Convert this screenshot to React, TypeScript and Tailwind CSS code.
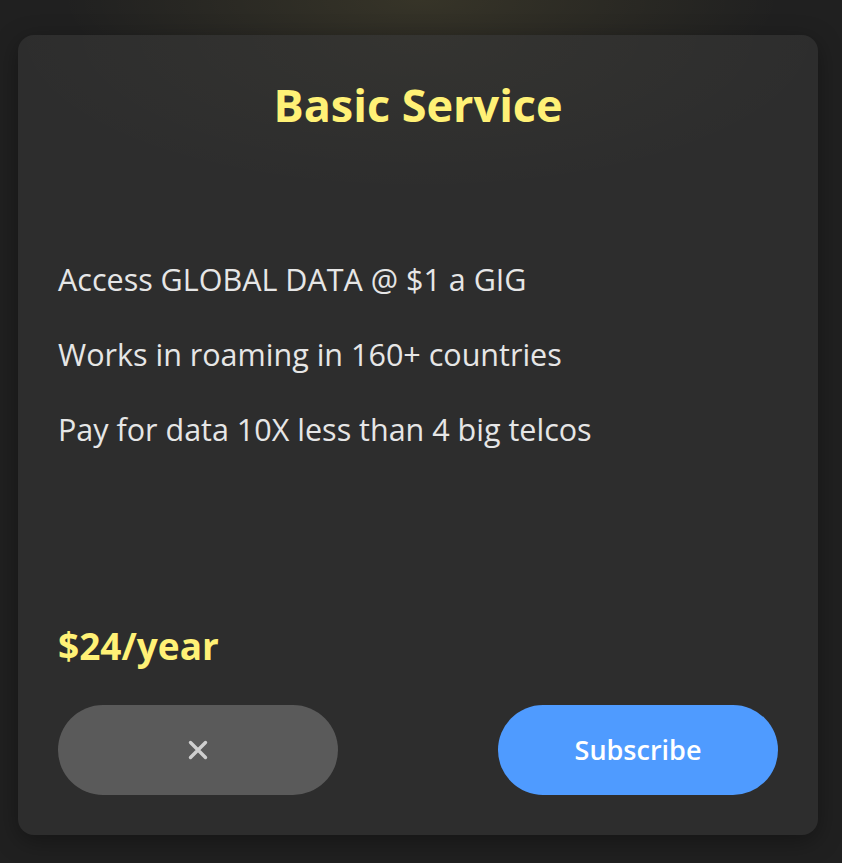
import React from "react";

const features = [
  "Access GLOBAL DATA @ $1 a GIG",
  "Works in roaming in 160+ countries",
  "Pay for data 10X less than 4 big telcos",
];

const CloseIcon: React.FC = () => (
  <svg width="22" height="22" viewBox="0 0 22 22" fill="none">
    <path d="M3.5 3.5L18.5 18.5M18.5 3.5L3.5 18.5" stroke="#cfcfcf" strokeWidth="3.4" strokeLinecap="round" />
  </svg>
);

const App: React.FC = () => {
  return (
    <div
      className="min-h-[863px] w-full bg-[#202020] bg-[radial-gradient(ellipse_360px_110px_at_50%_0%,rgba(255,230,110,0.10),transparent)] pl-[18px] pt-[35px]"
      style={{ fontFamily: '"Open Sans", "Noto Sans", sans-serif' }}
    >
      {/* Plan card */}
      <div className="flex h-[800px] w-[800px] flex-col rounded-2xl bg-[#2d2d2d] bg-[radial-gradient(ellipse_420px_160px_at_50%_0%,rgba(255,240,150,0.035),transparent)] p-10 shadow-[0_6px_24px_rgba(0,0,0,0.35)]">
        <h2 className="text-center text-[45px] font-bold leading-[60px] text-[#fff176]">
          Basic Service
        </h2>

        <div className="mt-[123px] flex flex-col gap-[32px]">
          {features.map((f) => (
            <p key={f} className="text-[30.5px] leading-[43px] text-[#e6e6e6]">
              {f}
            </p>
          ))}
        </div>

        <div className="mt-auto text-[37px] font-bold leading-[50px] text-[#fff176]">
          $24/year
        </div>

        {/* Actions */}
        <div className="mt-[34px] flex items-center justify-between">
          <button className="flex h-[90px] w-[280px] items-center justify-center rounded-full bg-[#5a5a5a]">
            <CloseIcon />
          </button>
          <button className="flex h-[90px] w-[280px] items-center justify-center rounded-full bg-[#4f9bff] text-[27px] font-semibold text-white">
            Subscribe
          </button>
        </div>
      </div>
    </div>
  );
};

export default App;
